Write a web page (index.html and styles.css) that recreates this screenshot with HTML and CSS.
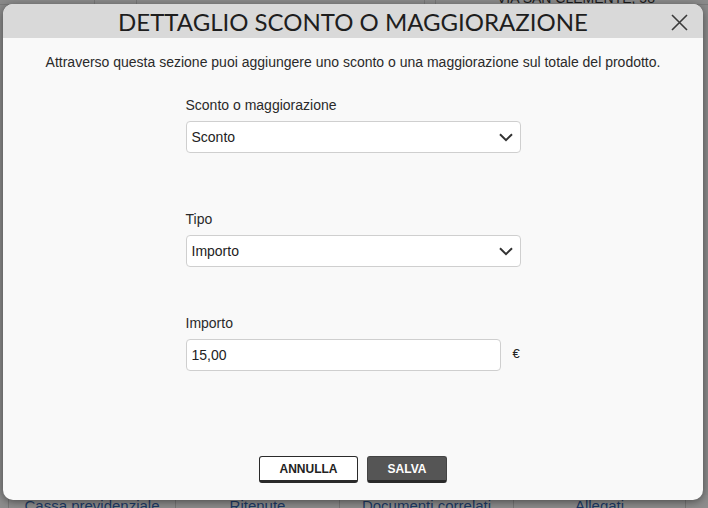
FILE: index.html
```html
<!DOCTYPE html>
<html lang="it">
<head>
<meta charset="utf-8">
<title>Dettaglio sconto o maggiorazione</title>
<link rel="stylesheet" href="styles.css">
</head>
<body>
<div class="page">
  <div class="top-row">
    <div class="cell c1"></div>
    <div class="cell c2"></div>
    <div class="cell c3"></div>
    <div class="cell c4"></div>
    <div class="cell c5">VIA SAN CLEMENTE, 58</div>
  </div>
  <div class="page-main"></div>
  <div class="tabs">
    <div class="tab-lead"></div>
    <div class="tab">Cassa previdenziale</div>
    <div class="tab">Ritenute</div>
    <div class="tab">Documenti correlati</div>
    <div class="tab">Allegati</div>
    <div class="tab-tail"></div>
  </div>
</div>

<div class="modal">
  <div class="modal-header">
    <h1 class="modal-title">DETTAGLIO SCONTO O MAGGIORAZIONE</h1>
    <button class="modal-close" aria-label="Chiudi">
      <svg width="17" height="17" viewBox="0 0 17 17"><path d="M1 1 L16 16 M16 1 L1 16" stroke="#3a3a3a" stroke-width="1.6" fill="none"/></svg>
    </button>
  </div>
  <div class="modal-body">
    <p class="intro">Attraverso questa sezione puoi aggiungere uno sconto o una maggiorazione sul totale del prodotto.</p>
    <div class="form">
      <div class="field f1">
        <div class="label">Sconto o maggiorazione</div>
        <div class="select"><span>Sconto</span>
          <svg class="chev" width="14" height="9" viewBox="0 0 14 9"><path d="M1 1.2 L7 7.2 L13 1.2" stroke="#333" stroke-width="2" fill="none"/></svg>
        </div>
      </div>
      <div class="field f2">
        <div class="label">Tipo</div>
        <div class="select"><span>Importo</span>
          <svg class="chev" width="14" height="9" viewBox="0 0 14 9"><path d="M1 1.2 L7 7.2 L13 1.2" stroke="#333" stroke-width="2" fill="none"/></svg>
        </div>
      </div>
      <div class="field f3">
        <div class="label">Importo</div>
        <div class="input-row">
          <input class="input" type="text" value="15,00">
          <span class="currency">€</span>
        </div>
      </div>
    </div>
  </div>
  <div class="modal-footer">
    <button class="btn btn-cancel">ANNULLA</button>
    <button class="btn btn-save">SALVA</button>
  </div>
</div>
</body>
</html>
```

FILE: styles.css
```css
* { box-sizing: border-box; }
html, body { margin: 0; padding: 0; }
body {
  width: 708px;
  height: 508px;
  overflow: hidden;
  background: #8a8a8a;
  font-family: "Liberation Sans", Arial, sans-serif;
  position: relative;
}

/* background page (dimmed) */
.page {
  height: 508px;
  display: flex;
  flex-direction: column;
}
.top-row {
  display: flex;
  height: 14px;
  margin-top: -9px;
  border-bottom: 1px solid #7a7a7a;
}
.cell { height: 100%; border-right: 1px solid #777; }
.c1 { width: 95px; }
.c2 { width: 42px; }
.c3 { width: 288px; }
.c4 { width: 11px; }
.c5 {
  flex: 1;
  border-right: none;
  padding-left: 61px;
  font-size: 14px;
  line-height: 14px;
  color: #1a1a1a;
}
.page-main { flex: 1; }
.tabs {
  display: flex;
  height: 22px;
  background: #8d8d8d;
  margin-bottom: -9px;
}
.tab-lead { width: 9px; border-right: 1px solid #777; }
.tab {
  text-align: center;
  font-size: 15px;
  line-height: 22px;
  color: #1c3a66;
  border-right: 1px solid #777;
}
.tab:nth-child(2) { width: 167px; }
.tab:nth-child(3) { width: 164px; }
.tab:nth-child(4) { width: 174px; }
.tab:nth-child(5) { width: 172px; }
.tab-tail { flex: 1; }

/* modal */
.modal {
  position: absolute;
  left: 3px;
  top: 4px;
  width: 700px;
  height: 496px;
  background: #f9f9f9;
  border-radius: 10px;
  overflow: hidden;
  box-shadow: 0 2px 8px rgba(0,0,0,0.45);
  display: flex;
  flex-direction: column;
}
.modal-header {
  height: 34px;
  background: #d9d9d9;
  position: relative;
  flex: none;
}
.modal-title {
  margin: 0;
  text-align: center;
  font-family: Lato, "Open Sans", sans-serif;
  font-weight: 400;
  font-size: 24px;
  line-height: 36px;
  color: #1e1e1e;
}
.modal-close {
  position: absolute;
  right: 15px;
  top: 10px;
  width: 17px;
  height: 17px;
  padding: 0;
  border: none;
  background: none;
  display: block;
}
.modal-close svg { display: block; }

.modal-body {
  flex: 1;
  padding-top: 16px;
}
.intro {
  margin: 0;
  text-align: center;
  font-size: 14px;
  line-height: 16px;
  color: #2a2a2a;
}
.form {
  width: 335px;
  margin: 0 auto;
  display: flex;
  flex-direction: column;
}
.f1 { margin-top: 27px; }
.f2 { margin-top: 58px; }
.f3 { margin-top: 48px; }
.label {
  font-size: 14px;
  line-height: 16px;
  color: #2a2a2a;
  margin-bottom: 8px;
}
.select {
  height: 32px;
  background: #fff;
  border: 1px solid #cfcfcf;
  border-radius: 4px;
  display: flex;
  align-items: center;
  justify-content: space-between;
  padding: 0 7px 0 5px;
  font-size: 14px;
  color: #222;
}
.chev { display: block; margin-top: 1px; }
.input-row {
  display: flex;
  align-items: center;
  gap: 12px;
}
.input {
  width: 315px;
  height: 32px;
  background: #fff;
  border: 1px solid #cfcfcf;
  border-radius: 4px;
  padding: 0 5px;
  font-family: "Liberation Sans", Arial, sans-serif;
  font-size: 14px;
  color: #222;
  outline: none;
}
.currency {
  font-size: 13px;
  color: #222;
  margin-top: -4px;
}

.modal-footer {
  flex: none;
  display: flex;
  justify-content: center;
  gap: 9px;
  padding-bottom: 17px;
}
.btn {
  height: 27px;
  border-radius: 3px;
  font-family: "Liberation Sans", Arial, sans-serif;
  font-weight: bold;
  font-size: 12px;
  padding: 0;
  cursor: pointer;
}
.btn-cancel {
  width: 99px;
  background: #fff;
  color: #222;
  border: 1px solid #2a2a2a;
  border-bottom-width: 3px;
}
.btn-save {
  width: 80px;
  background: #555;
  color: #fff;
  border: 1px solid #444;
  border-bottom: 3px solid #2a2a2a;
}
```
